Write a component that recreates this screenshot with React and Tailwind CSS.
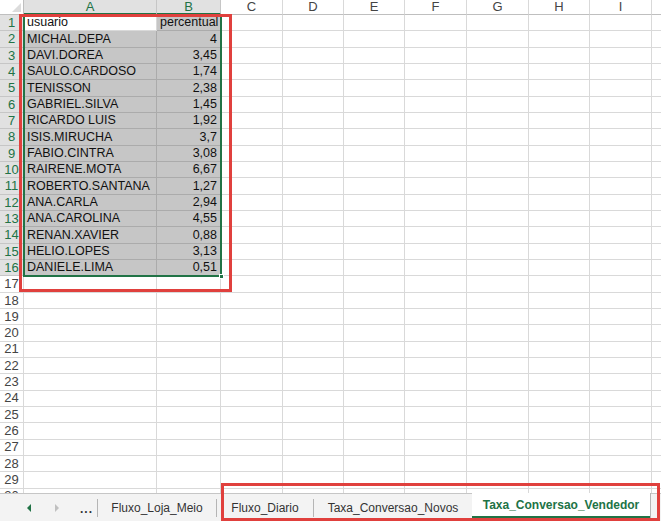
import React from 'react'

const COLS = [
  { k: 'A', w: 'w-[133px]' },
  { k: 'B', w: 'w-[64px]' },
  { k: 'C', w: 'w-[62px]' },
  { k: 'D', w: 'w-[61px]' },
  { k: 'E', w: 'w-[61px]' },
  { k: 'F', w: 'w-[62px]' },
  { k: 'G', w: 'w-[62px]' },
  { k: 'H', w: 'w-[61px]' },
  { k: 'I', w: 'w-[62px]' },
  { k: '', w: 'w-[62px]' },
]

const DATA = [
  ['usuario', 'percentual'],
  ['MICHAL.DEPA', '4'],
  ['DAVI.DOREA', '3,45'],
  ['SAULO.CARDOSO', '1,74'],
  ['TENISSON', '2,38'],
  ['GABRIEL.SILVA', '1,45'],
  ['RICARDO LUIS', '1,92'],
  ['ISIS.MIRUCHA', '3,7'],
  ['FABIO.CINTRA', '3,08'],
  ['RAIRENE.MOTA', '6,67'],
  ['ROBERTO.SANTANA', '1,27'],
  ['ANA.CARLA', '2,94'],
  ['ANA.CAROLINA', '4,55'],
  ['RENAN.XAVIER', '0,88'],
  ['HELIO.LOPES', '3,13'],
  ['DANIELE.LIMA', '0,51'],
]

const ROWS = Array.from({ length: 30 }, (_, i) => i + 1)

function Cell({ col, row }) {
  const ci = COLS.indexOf(col)
  const inSel = ci < 2 && row <= 16
  const active = ci === 0 && row === 1
  const val = row <= 16 && ci < 2 ? DATA[row - 1][ci] : ''
  const numeric = ci === 1 && row > 1
  return (
    <div
      className={`${col.w} shrink-0 h-full border-r border-b flex items-center overflow-hidden whitespace-nowrap text-[12.5px] text-[#111] ${
        inSel && !active ? 'bg-[#c6c6c6] border-[#ababab]' : 'bg-white border-[#d9d9d9]'
      } ${numeric ? 'justify-end pr-[3px]' : 'pl-[3px]'}`}
    >
      {val}
    </div>
  )
}

export default function App() {
  return (
    <div className="relative w-[661px] h-[521px] overflow-hidden bg-white font-['Liberation_Sans',Arial,sans-serif]">
      {/* sheet */}
      <div className="h-[493px] overflow-hidden flex flex-col">
        {/* column headers */}
        <div className="flex h-[15px] shrink-0">
          <div className="relative w-[24px] shrink-0 border-r border-b border-[#bfbfbf] bg-white">
            <div className="absolute right-[2px] bottom-[2px] w-0 h-0 border-l-[9px] border-l-transparent border-b-[9px] border-b-[#dcdcdc]" />
          </div>
          {COLS.map((c, i) => (
            <div
              key={i}
              className={`${c.w} shrink-0 flex items-center justify-center text-[13px] ${
                i < 2
                  ? 'bg-[#e1e1e1] text-[#217346] border-b-2 border-b-[#217346] border-r border-r-[#c6c6c6]'
                  : 'bg-white text-[#444] border-b border-b-[#bfbfbf] border-r border-r-[#d9d9d9]'
              }`}
            >
              {c.k}
            </div>
          ))}
        </div>
        {ROWS.map(r => (
          <div key={r} className="flex h-[16.33px] shrink-0">
            <div
              className={`w-[24px] shrink-0 flex items-center justify-center text-[13px] border-r border-b ${
                r <= 16
                  ? 'bg-[#e1e1e1] text-[#217346] border-[#c6c6c6]'
                  : 'bg-white text-[#444] border-[#d9d9d9]'
              }`}
            >
              {r}
            </div>
            {COLS.map((c, i) => (
              <Cell key={i} col={c} row={r} />
            ))}
          </div>
        ))}
      </div>

      {/* tab bar */}
      <div className="h-[28px] flex items-stretch bg-[#f3f3f3] border-t border-[#c6c6c6] text-[12px] text-[#333]">
        <div className="w-[97px] shrink-0 flex items-center">
          <span className="ml-[27px] w-0 h-0 border-y-[4px] border-y-transparent border-r-[4px] border-r-[#217346]" />
          <span className="ml-[24px] w-0 h-0 border-y-[4px] border-y-transparent border-l-[4px] border-l-[#c0c0c0]" />
          <span className="ml-[21px] text-[12px] font-bold tracking-[1px] text-[#333] mt-[3px]">...</span>
        </div>
        <div className="flex items-center">
          <span className="w-px h-[18px] bg-[#b5b5b5]" />
        </div>
        <div className="w-[118px] shrink-0 flex items-center justify-center">Fluxo_Loja_Meio</div>
        <div className="flex items-center">
          <span className="w-px h-[18px] bg-[#b5b5b5]" />
        </div>
        <div className="w-[96px] shrink-0 flex items-center justify-center">Fluxo_Diario</div>
        <div className="flex items-center">
          <span className="w-px h-[18px] bg-[#b5b5b5]" />
        </div>
        <div className="w-[158px] shrink-0 flex items-center justify-center">Taxa_Conversao_Novos</div>
        <div className="w-[179px] shrink-0 -mt-px bg-white border-r border-[#b5b5b5] flex flex-col items-center">
          <div className="flex-1 flex items-center justify-center font-bold text-[#217346]">
            Taxa_Conversao_Vendedor
          </div>
          <div className="h-[2px] w-full bg-[#217346] mb-[3px]" />
        </div>
      </div>

      {/* selection border + fill handle */}
      <div className="absolute left-[23px] top-[14px] w-[199px] h-[263px] border-2 border-[#217346] pointer-events-none" />
      <div className="absolute left-[219px] top-[274px] w-[5px] h-[5px] bg-[#217346] border border-white" />

      {/* red annotations */}
      <div className="absolute left-[19px] top-[14px] w-[213px] h-[278px] border-[3px] border-[#e0403d] pointer-events-none" />
      <div className="absolute left-[221px] top-[483px] w-[439px] h-[38px] border-[3px] border-[#e0403d] pointer-events-none" />
    </div>
  )
}
